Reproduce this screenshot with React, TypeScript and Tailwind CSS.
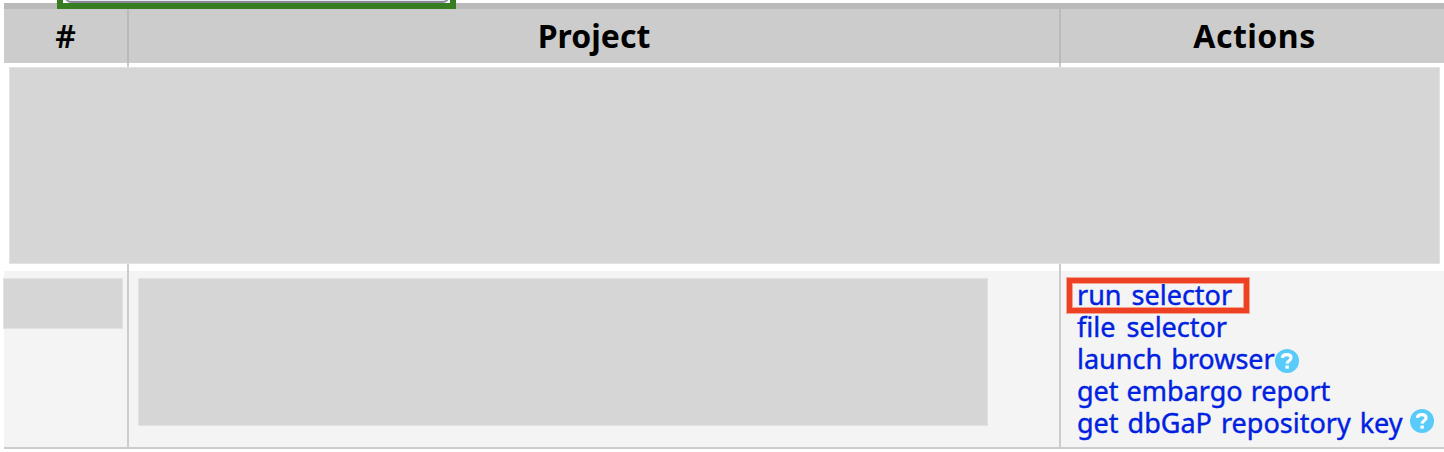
import React from "react";

function HelpIcon({ className }: { className: string }) {
  return (
    <svg className={`h-6 w-6 shrink-0 ${className}`} viewBox="0 0 24 24" fill="none">
      <circle cx="12" cy="12" r="12" fill="#58cbfa" />
      <path d="M7.3 8.9C7.5 6.6 9.4 5.6 11.8 5.6c2.6 0 4.3 1.2 4.3 3.2 0 3-3.9 2.9-4 5.8" stroke="#fff" strokeWidth="3.1" />
      <rect x="10.4" y="16.5" width="3.4" height="3.2" fill="#fff" />
    </svg>
  );
}

const block = "border border-[#e2e2e2] bg-[#d6d6d6]";
const head = "flex items-center justify-center leading-none";

export default function App() {
  return (
    <div className="relative h-[452px] w-[1444px] overflow-hidden bg-white pt-[3px] pl-1 font-['Noto_Sans',sans-serif] text-black">
      <div className="h-[6px] bg-[#bababa]" />
      <div className="grid h-[54px] grid-cols-[125px_932px_1fr] bg-[#cccccc]">
        <div className={`${head} border-r-2 border-[#bababa] text-[32px] font-semibold`}>#</div>
        <div className={`${head} border-r-2 border-[#bababa] text-[32px] font-bold`}>Project</div>
        <div className={`${head} pl-1 text-[32px] font-bold tracking-[0.5px]`}>Actions</div>
      </div>
      <div className="grid h-[208px] grid-cols-[125px_932px_1fr]">
        <div className="border-r-2 border-[#cccccc]" />
        <div className="border-r-2 border-[#cccccc]" />
        <div />
      </div>
      <div className="grid h-[178px] grid-cols-[125px_932px_1fr] border-b-2 border-[#cccccc] bg-[#f4f4f4]">
        <div className="border-r-2 border-[#cccccc] pt-[7px]">
          <div className={`${block} -ml-px h-[51px] w-[120px]`} />
        </div>
        <div className="border-r-2 border-[#cccccc] pt-[7px] pl-[9px]">
          <div className={`${block} h-[148px] w-[850px]`} />
        </div>
        <div className="relative pt-2 pl-4 text-[27px] leading-8 whitespace-nowrap text-[#0022e0] [-webkit-text-stroke:0.4px_#0022e0]">
          <div className="absolute top-[6px] left-[5px] h-[37px] w-[184px] border border-[#f5a493]">
            <div className="h-full border-[5px] border-[#ee4023]">
              <div className="h-full border border-[#f5a493]" />
            </div>
          </div>
          <div className="flex h-8 [word-spacing:3px]">run selector</div>
          <div className="flex h-8 [word-spacing:4px]">file selector</div>
          <div className="flex h-8 [word-spacing:2px]"><span className="w-[198px]">launch browser</span><HelpIcon className="mt-[6px]" /></div>
          <div className="flex h-8 [word-spacing:1px]">get embargo report</div>
          <div className="flex h-8 [word-spacing:2px]"><span className="w-[333px]">get dbGaP repository key</span><HelpIcon className="mt-[2px]" /></div>
        </div>
      </div>
      <div className={`${block} absolute top-[67px] left-[9px] h-[197px] w-[1431px]`} />
      <div className="absolute top-0 left-[57px] h-[9px] w-[399px] overflow-hidden border-x-[6px] border-b-[6px] border-[#377e22] bg-white">
        <div className="absolute -top-5 left-[2px] h-[23px] w-[384px] rounded-[6px] border-2 border-[#88889a] bg-[#e8e8ee]" />
      </div>
    </div>
  );
}
